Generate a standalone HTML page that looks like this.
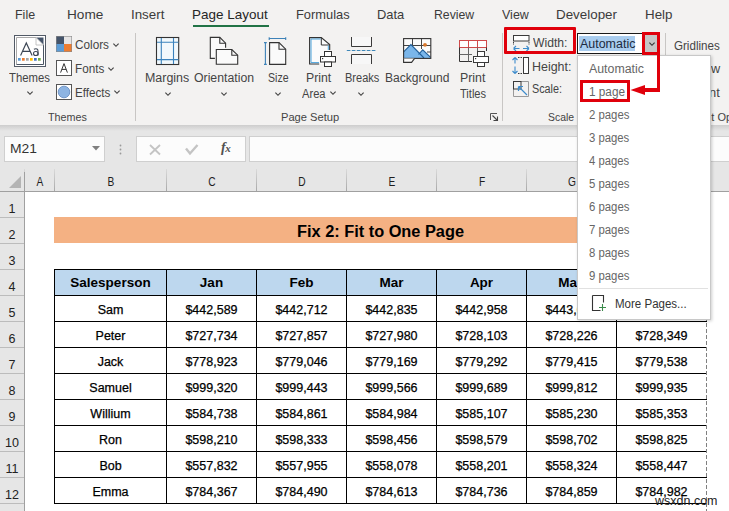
<!DOCTYPE html>
<html><head><meta charset="utf-8">
<style>
*{margin:0;padding:0;box-sizing:border-box}
html,body{width:729px;height:511px;overflow:hidden;background:#fff;font-family:"Liberation Sans",sans-serif;color:#262626;position:relative}
.a{position:absolute}
.t{position:absolute;white-space:nowrap}
svg{overflow:visible}
</style></head><body>
<div class="a" style="left:0;top:0;width:729px;height:125px;background:#f3f2f1"></div>
<div class="t" style="left:15.04px;top:8.20px;font-size:13px;line-height:13px;color:#3b3b3b;font-weight:normal;transform:scaleX(0.9588);transform-origin:0 0;">File</div>
<div class="t" style="left:66.95px;top:8.20px;font-size:13px;line-height:13px;color:#3b3b3b;font-weight:normal;transform:scaleX(1.0483);transform-origin:0 0;">Home</div>
<div class="t" style="left:130.77px;top:8.20px;font-size:13px;line-height:13px;color:#3b3b3b;font-weight:normal;transform:scaleX(1.0256);transform-origin:0 0;">Insert</div>
<div class="t" style="left:192.46px;top:8.20px;font-size:13px;line-height:13px;color:#262626;font-weight:normal;transform:scaleX(1.0362);transform-origin:0 0;">Page Layout</div>
<div class="t" style="left:295.61px;top:8.20px;font-size:13px;line-height:13px;color:#3b3b3b;font-weight:normal;transform:scaleX(0.9886);transform-origin:0 0;">Formulas</div>
<div class="t" style="left:377.01px;top:8.20px;font-size:13px;line-height:13px;color:#3b3b3b;font-weight:normal;transform:scaleX(0.9925);transform-origin:0 0;">Data</div>
<div class="t" style="left:433.56px;top:8.20px;font-size:13px;line-height:13px;color:#3b3b3b;font-weight:normal;transform:scaleX(0.9423);transform-origin:0 0;">Review</div>
<div class="t" style="left:502.00px;top:8.20px;font-size:13px;line-height:13px;color:#3b3b3b;font-weight:normal;transform:scaleX(0.9606);transform-origin:0 0;">View</div>
<div class="t" style="left:556.07px;top:8.20px;font-size:13px;line-height:13px;color:#3b3b3b;font-weight:normal;transform:scaleX(1.0293);transform-origin:0 0;">Developer</div>
<div class="t" style="left:644.57px;top:8.20px;font-size:13px;line-height:13px;color:#3b3b3b;font-weight:normal;transform:scaleX(1.0278);transform-origin:0 0;">Help</div>
<div class="a" style="left:193px;top:24.5px;width:75.5px;height:2.5px;background:#217346"></div>
<div class="a" style="left:135px;top:33px;width:1px;height:88px;background:#c8c6c4"></div>
<div class="a" style="left:502px;top:33px;width:1px;height:88px;background:#c8c6c4"></div>
<div class="a" style="left:665px;top:33px;width:1px;height:88px;background:#c8c6c4"></div>
<svg class="a" style="left:14px;top:35px" width="32" height="32">
<rect x="0.5" y="0.5" width="31" height="31" fill="#fff" stroke="#525a66"/>
<path d="M2.5,29.5 L2.5,2.5 L22,2.5" fill="none" stroke="#a9a9a9"/>
<path d="M29.5,9.5 L29.5,29.5 L2.5,29.5" fill="none" stroke="#4a5563"/>
<path d="M22,2.5 L29.5,2.5 L29.5,10 Z" fill="#44546a"/>
<path d="M22,2.5 L22,10 L29.5,10 Z" fill="#fff" stroke="#b5b5b5" stroke-width="0.8"/>
<path d="M6.6,20.6 L12.3,8 L18.1,20.6 M8.6,16.4 L16.1,16.4" fill="none" stroke="#3c4654" stroke-width="1.15"/>
<path d="M19.9,14.3 Q21.6,13.5 23,14 Q24,14.6 24,16 L24,20.6" fill="none" stroke="#3c4654" stroke-width="1.1"/>
<ellipse cx="21.8" cy="18.5" rx="2.3" ry="2" fill="none" stroke="#3c4654" stroke-width="1.1"/>
<rect x="4" y="23" width="2.7" height="2.7" fill="#5b9bd5"/><rect x="8" y="23" width="2.7" height="2.7" fill="#ed7d31"/>
<rect x="12" y="23" width="2.7" height="2.7" fill="#a5a5a5"/><rect x="16" y="23" width="2.7" height="2.7" fill="#ffc000"/>
<rect x="20" y="23" width="2.7" height="2.7" fill="#4472c4"/><rect x="24" y="23" width="2.7" height="2.7" fill="#70ad47"/>
</svg>
<div class="t" style="left:9.41px;top:72.44px;font-size:12px;line-height:12px;color:#444444;font-weight:normal;transform:scaleX(0.9438);transform-origin:0 0;">Themes</div>
<svg class="t" style="left:24.7px;top:89.2px" width="10" height="8"><path d="M2.4,2.7 L5,5.3 L7.6,2.7" fill="none" stroke="#404040" stroke-width="1.15"/></svg>
<svg class="a" style="left:56px;top:36px" width="16" height="16">
<rect x="0" y="0" width="8" height="8" fill="#44546a"/><rect x="8" y="0" width="8" height="8" fill="#e7e6e6"/>
<rect x="0" y="8" width="8" height="8" fill="#5b9bd5"/><rect x="8" y="8" width="8" height="8" fill="#ed7d31"/>
<rect x="0.3" y="0.3" width="15.4" height="15.4" fill="none" stroke="#8a8a8a" stroke-width="0.6"/>
</svg>
<svg class="a" style="left:56px;top:60px" width="16" height="16">
<rect x="0.5" y="0.5" width="15" height="15" fill="#fff" stroke="#555"/>
<path d="M4.6,12.6 L8,3.6 L11.4,12.6 M5.9,9.4 L10.1,9.4" fill="none" stroke="#333" stroke-width="1"/>
</svg>
<svg class="a" style="left:56px;top:84px" width="16" height="16">
<rect x="0.5" y="0.5" width="15" height="15" fill="#fff" stroke="#555"/>
<circle cx="8" cy="8" r="5.8" fill="#8db4e2" stroke="#6a90c4" stroke-width="0.9"/>
</svg>
<div class="t" style="left:75.11px;top:38.84px;font-size:12px;line-height:12px;color:#444444;font-weight:normal;transform:scaleX(0.9792);transform-origin:0 0;">Colors</div>
<svg class="t" style="left:111px;top:40.5px" width="10" height="8"><path d="M2.4,2.7 L5,5.3 L7.6,2.7" fill="none" stroke="#404040" stroke-width="1.15"/></svg>
<div class="t" style="left:74.72px;top:63.04px;font-size:12px;line-height:12px;color:#444444;font-weight:normal;transform:scaleX(0.9755);transform-origin:0 0;">Fonts</div>
<svg class="t" style="left:105.5px;top:64.5px" width="10" height="8"><path d="M2.4,2.7 L5,5.3 L7.6,2.7" fill="none" stroke="#404040" stroke-width="1.15"/></svg>
<div class="t" style="left:74.73px;top:86.74px;font-size:12px;line-height:12px;color:#444444;font-weight:normal;transform:scaleX(0.9687);transform-origin:0 0;">Effects</div>
<svg class="t" style="left:111.7px;top:88.3px" width="10" height="8"><path d="M2.4,2.7 L5,5.3 L7.6,2.7" fill="none" stroke="#404040" stroke-width="1.15"/></svg>
<div class="t" style="left:48.00px;top:112.29px;font-size:11px;line-height:11px;color:#444;font-weight:normal;transform:scaleX(0.9795);transform-origin:0 0;">Themes</div>
<div class="t" style="left:144.96px;top:72.14px;font-size:12px;line-height:12px;color:#444444;font-weight:normal;transform:scaleX(1.0363);transform-origin:0 0;">Margins</div>
<svg class="t" style="left:162.5px;top:89.5px" width="10" height="8"><path d="M2.4,2.7 L5,5.3 L7.6,2.7" fill="none" stroke="#404040" stroke-width="1.15"/></svg>
<div class="t" style="left:193.79px;top:72.14px;font-size:12px;line-height:12px;color:#444444;font-weight:normal;transform:scaleX(1.0226);transform-origin:0 0;">Orientation</div>
<svg class="t" style="left:218.5px;top:89.5px" width="10" height="8"><path d="M2.4,2.7 L5,5.3 L7.6,2.7" fill="none" stroke="#404040" stroke-width="1.15"/></svg>
<div class="t" style="left:267.96px;top:72.14px;font-size:12px;line-height:12px;color:#444444;font-weight:normal;transform:scaleX(0.8795);transform-origin:0 0;">Size</div>
<svg class="t" style="left:273px;top:89.5px" width="10" height="8"><path d="M2.4,2.7 L5,5.3 L7.6,2.7" fill="none" stroke="#404040" stroke-width="1.15"/></svg>
<div class="t" style="left:306.48px;top:72.14px;font-size:12px;line-height:12px;color:#444444;font-weight:normal;transform:scaleX(1.0212);transform-origin:0 0;">Print</div>
<div class="t" style="left:302.10px;top:88.24px;font-size:12px;line-height:12px;color:#444444;font-weight:normal;transform:scaleX(0.9291);transform-origin:0 0;">Area</div>
<svg class="t" style="left:327.5px;top:89px" width="10" height="8"><path d="M2.4,2.7 L5,5.3 L7.6,2.7" fill="none" stroke="#404040" stroke-width="1.15"/></svg>
<div class="t" style="left:344.68px;top:72.14px;font-size:12px;line-height:12px;color:#444444;font-weight:normal;transform:scaleX(0.9192);transform-origin:0 0;">Breaks</div>
<svg class="t" style="left:356px;top:89.5px" width="10" height="8"><path d="M2.4,2.7 L5,5.3 L7.6,2.7" fill="none" stroke="#404040" stroke-width="1.15"/></svg>
<div class="t" style="left:384.70px;top:72.14px;font-size:12px;line-height:12px;color:#444444;font-weight:normal;transform:scaleX(1.0048);transform-origin:0 0;">Background</div>
<div class="t" style="left:459.57px;top:72.14px;font-size:12px;line-height:12px;color:#444444;font-weight:normal;transform:scaleX(1.0297);transform-origin:0 0;">Print</div>
<div class="t" style="left:460.12px;top:88.04px;font-size:12px;line-height:12px;color:#444444;font-weight:normal;transform:scaleX(0.9239);transform-origin:0 0;">Titles</div>
<div class="t" style="left:281.19px;top:112.29px;font-size:11px;line-height:11px;color:#444;font-weight:normal;transform:scaleX(1.0125);transform-origin:0 0;">Page Setup</div>
<svg class="a" style="left:490px;top:113px" width="9" height="9"><path d="M0.5,7 L0.5,0.5 L7,0.5" fill="none" stroke="#555" stroke-width="1"/><path d="M2.5,2.5 L7.5,7.5 M7.5,3.5 L7.5,7.5 L3.5,7.5" fill="none" stroke="#444" stroke-width="1.1"/></svg>
<svg class="a" style="left:156px;top:37px" width="24" height="28">
<rect x="0.5" y="0.5" width="22.2" height="27" fill="#f1f8fc" stroke="#333" stroke-width="1.1"/>
<path d="M5.3,1 L5.3,27 M17.5,1 L17.5,27 M1,5.2 L22.5,5.2 M1,22.6 L22.5,22.6" stroke="#3a82bd" stroke-width="1.1"/>
</svg>
<svg class="a" style="left:209px;top:36px" width="31" height="31">
<path d="M1.3,1.4 L10.8,1.4 L16.6,7.2 L16.6,22.4 L1.3,22.4 Z" fill="#fafafa"/>
<path d="M16.6,11.8 L16.6,7.2 L10.8,1.4 L1.3,1.4 L1.3,22.4 L5.9,22.4" fill="none" stroke="#333" stroke-width="1.1"/>
<path d="M10.8,1.4 L10.8,7.2 L16.6,7.2" fill="none" stroke="#333" stroke-width="1.1"/>
<path d="M7.3,13.5 L22.8,13.5 L28.7,19.2 L28.7,28.3 L7.3,28.3 Z" fill="#fafafa" stroke="#333" stroke-width="1.1"/>
<path d="M22.8,13.5 L22.8,19.2 L28.7,19.2" fill="none" stroke="#333" stroke-width="1.1"/>
</svg>
<svg class="a" style="left:263px;top:36px" width="26" height="30">
<path d="M6.2,2.5 L22.7,2.5 M6.2,1.2 L6.2,3.9 M22.7,1.2 L22.7,3.9" stroke="#3d82b8" stroke-width="1.1"/>
<path d="M2.4,6.6 L2.4,28.4 M1,6.6 L3.8,6.6 M1,28.4 L3.8,28.4" stroke="#3d82b8" stroke-width="1.1"/>
<path d="M6.6,6.6 L16,6.6 L22.7,13.2 L22.7,28.4 L6.6,28.4 Z" fill="#fafafa" stroke="#333" stroke-width="1.1"/>
<path d="M16,6.6 L16,13.2 L22.7,13.2" fill="none" stroke="#333" stroke-width="1.1"/>
</svg>
<svg class="a" style="left:309px;top:37px" width="28" height="30">
<path d="M0.6,0.6 L12.3,0.6 L20.7,7.6 L20.7,27 L0.6,27 Z" fill="#fbfbfb"/>
<path d="M10.2,27 L0.6,27 L0.6,0.6 L12.3,0.6 L20.7,7.6 L20.7,13" fill="none" stroke="#333" stroke-width="1.1"/>
<path d="M12.3,0.6 L12.3,8 L20.7,8" fill="none" stroke="#333" stroke-width="1"/>
<path d="M11.5,2 L2,2 L2,25.6 L10,25.6 M19.3,8.5 L19.3,13" fill="none" stroke="#4aa3dc" stroke-width="1"/>
<rect x="15.5" y="14.5" width="7" height="5" fill="#fff" stroke="#333"/>
<rect x="11.5" y="19.5" width="15" height="5.5" fill="#fff" stroke="#333"/>
<rect x="15.5" y="25" width="7" height="4.5" fill="#fff" stroke="#333"/>
<rect x="13" y="21" width="1.2" height="1.2" fill="#333"/>
</svg>
<svg class="a" style="left:346px;top:37px" width="31" height="28">
<path d="M5.5,0 L5.5,9.5 L25.5,9.5 L25.5,0" fill="#f7f7f7" stroke="#3a3a3a"/>
<path d="M0.8,13.5 L30.2,13.5" stroke="#3f88b8" stroke-width="1.1" stroke-dasharray="3.6,1.4"/>
<path d="M5.5,27 L5.5,17.5 L25.5,17.5 L25.5,27" fill="#f7f7f7" stroke="#3a3a3a"/>
</svg>
<svg class="a" style="left:403px;top:38px" width="30" height="27">
<rect x="0.6" y="0.6" width="27.2" height="19.8" fill="#fbfbfb"/>
<path d="M9.5,0.6 L9.5,7 M18.5,0.6 L18.5,11 M0.6,7.5 L27.8,7.5 M0.6,14 L2,14 M24,14 L27.8,14" stroke="#444" stroke-width="1"/>
<path d="M0.6,20.4 L0.6,13.9 L7.9,6.6 L16.3,14.9 L19.7,11.8 L27.8,19.2 L27.8,20.4 Z" fill="#7ab6ea"/>
<path d="M0.6,13.9 L7.9,6.6 L21,20 M15.5,16.5 L19.7,11.8 L27.6,19.4" fill="none" stroke="#22609a" stroke-width="1.1"/>
<rect x="0.6" y="0.6" width="27.2" height="19.8" fill="none" stroke="#333" stroke-width="1.1"/>
<circle cx="22" cy="6.8" r="1.9" fill="#d9772a"/>
<path d="M0.6,20.4 L0.6,24.4 L8.6,24.4 L11.6,20.4" fill="#fbfbfb" stroke="#333" stroke-width="1.1"/>
</svg>
<svg class="a" style="left:459px;top:40px" width="31" height="28">
<rect x="0.5" y="0.5" width="27" height="7" fill="#fff" stroke="#d04a4a"/>
<path d="M9.5,0.5 L9.5,7.5 M18.5,0.5 L18.5,7.5" stroke="#d04a4a"/>
<path d="M0.5,7.5 L0.5,21.5 L13,21.5 M27.5,7.5 L27.5,11" fill="none" stroke="#333"/><path d="M0.5,14.5 L13,14.5 M9.5,7.5 L9.5,21.5 M18.5,7.5 L18.5,11" fill="none" stroke="#666"/>
<rect x="18.5" y="11.5" width="7" height="5" fill="#fff" stroke="#3a3a3a"/>
<rect x="14.5" y="16.5" width="15" height="6" fill="#fff" stroke="#3a3a3a"/>
<rect x="18.5" y="22.5" width="7" height="4" fill="#fff" stroke="#3a3a3a"/>
<rect x="16" y="18" width="1.2" height="1.2" fill="#3a3a3a"/>
</svg>
<svg class="a" style="left:512px;top:34px" width="18" height="18">
<rect x="1.5" y="1.5" width="15.5" height="5.5" fill="#fff" stroke="#3a3a3a"/>
<path d="M1.5,8 L1.5,11 M17,8 L17,11" stroke="#3a3a3a" stroke-dasharray="1.5,1"/>
<path d="M1.5,14.5 L7.5,14.5 M11,14.5 L17,14.5 M1.5,14.5 L4,12 M1.5,14.5 L4,17 M17,14.5 L14.5,12 M17,14.5 L14.5,17" stroke="#3d8ccc" stroke-width="1.1" fill="none"/>
</svg>
<svg class="a" style="left:512px;top:56px" width="18" height="20">
<path d="M3,1.5 L3,7.5 M3,10.5 L3,17.5 M3,1.5 L0.5,4 M3,1.5 L5.5,4 M3,17.5 L0.5,15 M3,17.5 L5.5,15" stroke="#3d8ccc" stroke-width="1.1" fill="none"/>
<path d="M6,1.5 L11,1.5 M6,17.5 L11,17.5" stroke="#3a3a3a" stroke-dasharray="1.5,1"/>
<rect x="11.5" y="1.5" width="5" height="16" fill="#fff" stroke="#3a3a3a"/>
</svg>
<svg class="a" style="left:512px;top:80px" width="18" height="18">
<path d="M1.5,9 L1.5,16.5 L16.5,16.5 L16.5,1.5 L9,1.5" fill="none" stroke="#9a9a9a"/>
<rect x="1.5" y="1.5" width="7.5" height="7.5" fill="none" stroke="#3a3a3a"/>
<path d="M15,15 L6.5,6.5 M6.5,6.5 L6.5,11 M6.5,6.5 L11,6.5" stroke="#3d8ccc" stroke-width="1.2" fill="none"/>
</svg>
<div class="t" style="left:532.50px;top:37.32px;font-size:12.5px;line-height:12.5px;color:#444444;font-weight:normal;transform:scaleX(0.9738);transform-origin:0 0;">Width:</div>
<div class="t" style="left:531.81px;top:60.52px;font-size:12.5px;line-height:12.5px;color:#444444;font-weight:normal;transform:scaleX(0.9947);transform-origin:0 0;">Height:</div>
<div class="t" style="left:531.88px;top:83.12px;font-size:12.5px;line-height:12.5px;color:#444444;font-weight:normal;transform:scaleX(0.8640);transform-origin:0 0;">Scale:</div>
<div class="t" style="left:547.83px;top:112.29px;font-size:11px;line-height:11px;color:#444;font-weight:normal;transform:scaleX(0.9474);transform-origin:0 0;">Scale</div>
<div class="a" style="left:577px;top:33px;width:66px;height:21px;background:#fff;border:1.5px solid #1a1a1a;border-right:none"></div>
<div class="a" style="left:579px;top:35.5px;width:56px;height:15.5px;background:#a9cdef"></div>
<div class="t" style="left:579.80px;top:37.72px;font-size:12.5px;line-height:12.5px;color:#1c2a40;font-weight:normal;transform:scaleX(0.9964);transform-origin:0 0;">Automatic</div>
<div class="a" style="left:643px;top:33px;width:16px;height:21px;background:#c6c6c6"></div>
<svg class="t" style="left:646.5px;top:40px" width="10" height="8"><path d="M2.4,2.7 L5,5.3 L7.6,2.7" fill="none" stroke="#333" stroke-width="1.15"/></svg>
<div class="t" style="left:674.22px;top:40.04px;font-size:12px;line-height:12px;color:#444444;font-weight:normal;transform:scaleX(0.9654);transform-origin:0 0;">Gridlines</div>
<div class="t" style="left:710.60px;top:63.34px;font-size:12px;line-height:12px;color:#444444;font-weight:normal;transform:scaleX(1.0575);transform-origin:0 0;">w</div>
<div class="t" style="left:708.64px;top:86.54px;font-size:12px;line-height:12px;color:#444444;font-weight:normal;transform:scaleX(1.0761);transform-origin:0 0;">nt</div>
<div class="t" style="left:711.3px;top:112.49px;font-size:11px;line-height:11px;color:#444;font-weight:normal;">t Options</div>
<div class="a" style="left:0;top:125px;width:729px;height:67px;background:#e6e6e6"></div>
<div class="a" style="left:0;top:125px;width:729px;height:6px;background:linear-gradient(#cdcdcd,#e6e6e6)"></div>
<div class="a" style="left:4px;top:136px;width:101px;height:26px;background:#fcfcfc;border:1px solid #cfcfcf"></div>
<div class="t" style="left:10.24px;top:143.24px;font-size:12px;line-height:12px;color:#333;font-weight:normal;transform:scaleX(1.1560);transform-origin:0 0;">M21</div>
<svg class="a" style="left:91.5px;top:145.5px" width="8" height="5"><path d="M0,0 L8,0 L4,4.5 Z" fill="#808080"/></svg>
<svg class="a" style="left:119px;top:144px" width="3" height="11"><circle cx="1.5" cy="1.5" r="0.9" fill="#9a9a9a"/><circle cx="1.5" cy="5.5" r="0.9" fill="#9a9a9a"/><circle cx="1.5" cy="9.5" r="0.9" fill="#9a9a9a"/></svg>
<div class="a" style="left:136px;top:136px;width:110px;height:26px;background:#fcfcfc;border:1px solid #cfcfcf"></div>
<svg class="a" style="left:149px;top:144px" width="12" height="12"><path d="M1,1 L11,10.5 M11,1 L1,10.5" stroke="#c4c4c4" stroke-width="1.8"/></svg>
<svg class="a" style="left:184px;top:143px" width="15" height="13"><path d="M2,5.5 L6,10.5 L13.5,2" fill="none" stroke="#c4c4c4" stroke-width="2.4"/></svg>
<div class="t" style="left:221px;top:141px;font-family:'Liberation Serif',serif;font-style:italic;font-weight:bold;font-size:14px;line-height:14px;color:#505050">f<span style="font-size:11px;margin-left:-0.5px">x</span></div>
<div class="a" style="left:249px;top:136px;width:490px;height:26px;background:#fcfcfc;border:1px solid #cfcfcf"></div>
<div class="a" style="left:0;top:191px;width:729px;height:1px;background:#a0a0a0"></div>
<svg class="a" style="left:9px;top:176px" width="13" height="13"><path d="M12,0 L12,12 L0,12 Z" fill="#b4b4b4"/></svg>
<div class="a" style="left:24px;top:169px;width:1px;height:22px;background:linear-gradient(#dadada,#a8a8a8)"></div>
<div class="a" style="left:54px;top:169px;width:1px;height:22px;background:linear-gradient(#dadada,#a8a8a8)"></div>
<div class="a" style="left:166px;top:169px;width:1px;height:22px;background:linear-gradient(#dadada,#a8a8a8)"></div>
<div class="a" style="left:256px;top:169px;width:1px;height:22px;background:linear-gradient(#dadada,#a8a8a8)"></div>
<div class="a" style="left:346px;top:169px;width:1px;height:22px;background:linear-gradient(#dadada,#a8a8a8)"></div>
<div class="a" style="left:436px;top:169px;width:1px;height:22px;background:linear-gradient(#dadada,#a8a8a8)"></div>
<div class="a" style="left:526px;top:169px;width:1px;height:22px;background:linear-gradient(#dadada,#a8a8a8)"></div>
<div class="a" style="left:616px;top:169px;width:1px;height:22px;background:linear-gradient(#dadada,#a8a8a8)"></div>
<div class="a" style="left:706px;top:169px;width:1px;height:22px;background:linear-gradient(#dadada,#a8a8a8)"></div>
<div class="t" style="left:9.50px;width:60px;text-align:center;top:176.44px;font-size:12px;line-height:12px;color:#1e1e1e;font-weight:normal;transform:scaleX(0.85)">A</div>
<div class="t" style="left:80.50px;width:60px;text-align:center;top:176.44px;font-size:12px;line-height:12px;color:#1e1e1e;font-weight:normal;transform:scaleX(0.85)">B</div>
<div class="t" style="left:181.50px;width:60px;text-align:center;top:176.44px;font-size:12px;line-height:12px;color:#1e1e1e;font-weight:normal;transform:scaleX(0.85)">C</div>
<div class="t" style="left:271.50px;width:60px;text-align:center;top:176.44px;font-size:12px;line-height:12px;color:#1e1e1e;font-weight:normal;transform:scaleX(0.85)">D</div>
<div class="t" style="left:361.50px;width:60px;text-align:center;top:176.44px;font-size:12px;line-height:12px;color:#1e1e1e;font-weight:normal;transform:scaleX(0.85)">E</div>
<div class="t" style="left:451.50px;width:60px;text-align:center;top:176.44px;font-size:12px;line-height:12px;color:#1e1e1e;font-weight:normal;transform:scaleX(0.85)">F</div>
<div class="t" style="left:541.50px;width:60px;text-align:center;top:176.44px;font-size:12px;line-height:12px;color:#1e1e1e;font-weight:normal;transform:scaleX(0.85)">G</div>
<div class="t" style="left:631.50px;width:60px;text-align:center;top:176.44px;font-size:12px;line-height:12px;color:#1e1e1e;font-weight:normal;transform:scaleX(0.85)">H</div>
<div class="a" style="left:0;top:192px;width:24px;height:319px;background:#e6e6e6"></div>
<div class="a" style="left:24px;top:172px;width:1px;height:339px;background:#a0a0a0"></div>
<div class="a" style="left:0;top:217px;width:24px;height:1px;background:#bcbcbc"></div>
<div class="t" style="left:0.00px;width:24px;text-align:center;top:202.62px;font-size:12.5px;line-height:12.5px;color:#222;font-weight:normal;">1</div>
<div class="a" style="left:0;top:243px;width:24px;height:1px;background:#bcbcbc"></div>
<div class="t" style="left:0.00px;width:24px;text-align:center;top:228.62px;font-size:12.5px;line-height:12.5px;color:#222;font-weight:normal;">2</div>
<div class="a" style="left:0;top:269px;width:24px;height:1px;background:#bcbcbc"></div>
<div class="t" style="left:0.00px;width:24px;text-align:center;top:254.62px;font-size:12.5px;line-height:12.5px;color:#222;font-weight:normal;">3</div>
<div class="a" style="left:0;top:295px;width:24px;height:1px;background:#bcbcbc"></div>
<div class="t" style="left:0.00px;width:24px;text-align:center;top:280.62px;font-size:12.5px;line-height:12.5px;color:#222;font-weight:normal;">4</div>
<div class="a" style="left:0;top:321px;width:24px;height:1px;background:#bcbcbc"></div>
<div class="t" style="left:0.00px;width:24px;text-align:center;top:306.62px;font-size:12.5px;line-height:12.5px;color:#222;font-weight:normal;">5</div>
<div class="a" style="left:0;top:347px;width:24px;height:1px;background:#bcbcbc"></div>
<div class="t" style="left:0.00px;width:24px;text-align:center;top:332.62px;font-size:12.5px;line-height:12.5px;color:#222;font-weight:normal;">6</div>
<div class="a" style="left:0;top:373px;width:24px;height:1px;background:#bcbcbc"></div>
<div class="t" style="left:0.00px;width:24px;text-align:center;top:358.62px;font-size:12.5px;line-height:12.5px;color:#222;font-weight:normal;">7</div>
<div class="a" style="left:0;top:399px;width:24px;height:1px;background:#bcbcbc"></div>
<div class="t" style="left:0.00px;width:24px;text-align:center;top:384.62px;font-size:12.5px;line-height:12.5px;color:#222;font-weight:normal;">8</div>
<div class="a" style="left:0;top:425px;width:24px;height:1px;background:#bcbcbc"></div>
<div class="t" style="left:0.00px;width:24px;text-align:center;top:410.62px;font-size:12.5px;line-height:12.5px;color:#222;font-weight:normal;">9</div>
<div class="a" style="left:0;top:451px;width:24px;height:1px;background:#bcbcbc"></div>
<div class="t" style="left:0.00px;width:24px;text-align:center;top:436.62px;font-size:12.5px;line-height:12.5px;color:#222;font-weight:normal;">10</div>
<div class="a" style="left:0;top:477px;width:24px;height:1px;background:#bcbcbc"></div>
<div class="t" style="left:0.00px;width:24px;text-align:center;top:462.62px;font-size:12.5px;line-height:12.5px;color:#222;font-weight:normal;">11</div>
<div class="a" style="left:0;top:503px;width:24px;height:1px;background:#bcbcbc"></div>
<div class="t" style="left:0.00px;width:24px;text-align:center;top:488.62px;font-size:12.5px;line-height:12.5px;color:#222;font-weight:normal;">12</div>
<div class="a" style="left:54px;top:217px;width:652px;height:26px;background:#f4b183"></div>
<div class="t" style="left:296.78px;top:224.06px;font-size:16px;line-height:16px;color:#000;font-weight:bold;transform:scaleX(1.0210);transform-origin:0 0;">Fix 2: Fit to One Page</div>
<div class="a" style="left:54px;top:269px;width:652px;height:26px;background:#bdd7ee"></div>
<div class="t" style="left:55.50px;width:110px;text-align:center;top:276.17px;font-size:13.5px;line-height:13.5px;color:#000;font-weight:bold;">Salesperson</div>
<div class="t" style="left:156.50px;width:110px;text-align:center;top:276.17px;font-size:13.5px;line-height:13.5px;color:#000;font-weight:bold;">Jan</div>
<div class="t" style="left:246.50px;width:110px;text-align:center;top:276.17px;font-size:13.5px;line-height:13.5px;color:#000;font-weight:bold;">Feb</div>
<div class="t" style="left:336.50px;width:110px;text-align:center;top:276.17px;font-size:13.5px;line-height:13.5px;color:#000;font-weight:bold;">Mar</div>
<div class="t" style="left:426.50px;width:110px;text-align:center;top:276.17px;font-size:13.5px;line-height:13.5px;color:#000;font-weight:bold;">Apr</div>
<div class="t" style="left:516.50px;width:110px;text-align:center;top:276.17px;font-size:13.5px;line-height:13.5px;color:#000;font-weight:bold;">May</div>
<div class="t" style="left:606.50px;width:110px;text-align:center;top:276.17px;font-size:13.5px;line-height:13.5px;color:#000;font-weight:bold;">Jun</div>
<div class="t" style="left:55.50px;width:110px;text-align:center;top:304.42px;font-size:12.5px;line-height:12.5px;color:#000;font-weight:normal;-webkit-text-stroke:0.25px #000">Sam</div>
<div class="t" style="left:156.50px;width:110px;text-align:center;top:304.42px;font-size:12.5px;line-height:12.5px;color:#000;font-weight:normal;-webkit-text-stroke:0.25px #000">$442,589</div>
<div class="t" style="left:246.50px;width:110px;text-align:center;top:304.42px;font-size:12.5px;line-height:12.5px;color:#000;font-weight:normal;-webkit-text-stroke:0.25px #000">$442,712</div>
<div class="t" style="left:336.50px;width:110px;text-align:center;top:304.42px;font-size:12.5px;line-height:12.5px;color:#000;font-weight:normal;-webkit-text-stroke:0.25px #000">$442,835</div>
<div class="t" style="left:426.50px;width:110px;text-align:center;top:304.42px;font-size:12.5px;line-height:12.5px;color:#000;font-weight:normal;-webkit-text-stroke:0.25px #000">$442,958</div>
<div class="t" style="left:516.50px;width:110px;text-align:center;top:304.42px;font-size:12.5px;line-height:12.5px;color:#000;font-weight:normal;-webkit-text-stroke:0.25px #000">$443,081</div>
<div class="t" style="left:606.50px;width:110px;text-align:center;top:304.42px;font-size:12.5px;line-height:12.5px;color:#000;font-weight:normal;-webkit-text-stroke:0.25px #000">$443,204</div>
<div class="t" style="left:55.50px;width:110px;text-align:center;top:330.42px;font-size:12.5px;line-height:12.5px;color:#000;font-weight:normal;-webkit-text-stroke:0.25px #000">Peter</div>
<div class="t" style="left:156.50px;width:110px;text-align:center;top:330.42px;font-size:12.5px;line-height:12.5px;color:#000;font-weight:normal;-webkit-text-stroke:0.25px #000">$727,734</div>
<div class="t" style="left:246.50px;width:110px;text-align:center;top:330.42px;font-size:12.5px;line-height:12.5px;color:#000;font-weight:normal;-webkit-text-stroke:0.25px #000">$727,857</div>
<div class="t" style="left:336.50px;width:110px;text-align:center;top:330.42px;font-size:12.5px;line-height:12.5px;color:#000;font-weight:normal;-webkit-text-stroke:0.25px #000">$727,980</div>
<div class="t" style="left:426.50px;width:110px;text-align:center;top:330.42px;font-size:12.5px;line-height:12.5px;color:#000;font-weight:normal;-webkit-text-stroke:0.25px #000">$728,103</div>
<div class="t" style="left:516.50px;width:110px;text-align:center;top:330.42px;font-size:12.5px;line-height:12.5px;color:#000;font-weight:normal;-webkit-text-stroke:0.25px #000">$728,226</div>
<div class="t" style="left:606.50px;width:110px;text-align:center;top:330.42px;font-size:12.5px;line-height:12.5px;color:#000;font-weight:normal;-webkit-text-stroke:0.25px #000">$728,349</div>
<div class="t" style="left:55.50px;width:110px;text-align:center;top:356.42px;font-size:12.5px;line-height:12.5px;color:#000;font-weight:normal;-webkit-text-stroke:0.25px #000">Jack</div>
<div class="t" style="left:156.50px;width:110px;text-align:center;top:356.42px;font-size:12.5px;line-height:12.5px;color:#000;font-weight:normal;-webkit-text-stroke:0.25px #000">$778,923</div>
<div class="t" style="left:246.50px;width:110px;text-align:center;top:356.42px;font-size:12.5px;line-height:12.5px;color:#000;font-weight:normal;-webkit-text-stroke:0.25px #000">$779,046</div>
<div class="t" style="left:336.50px;width:110px;text-align:center;top:356.42px;font-size:12.5px;line-height:12.5px;color:#000;font-weight:normal;-webkit-text-stroke:0.25px #000">$779,169</div>
<div class="t" style="left:426.50px;width:110px;text-align:center;top:356.42px;font-size:12.5px;line-height:12.5px;color:#000;font-weight:normal;-webkit-text-stroke:0.25px #000">$779,292</div>
<div class="t" style="left:516.50px;width:110px;text-align:center;top:356.42px;font-size:12.5px;line-height:12.5px;color:#000;font-weight:normal;-webkit-text-stroke:0.25px #000">$779,415</div>
<div class="t" style="left:606.50px;width:110px;text-align:center;top:356.42px;font-size:12.5px;line-height:12.5px;color:#000;font-weight:normal;-webkit-text-stroke:0.25px #000">$779,538</div>
<div class="t" style="left:55.50px;width:110px;text-align:center;top:382.42px;font-size:12.5px;line-height:12.5px;color:#000;font-weight:normal;-webkit-text-stroke:0.25px #000">Samuel</div>
<div class="t" style="left:156.50px;width:110px;text-align:center;top:382.42px;font-size:12.5px;line-height:12.5px;color:#000;font-weight:normal;-webkit-text-stroke:0.25px #000">$999,320</div>
<div class="t" style="left:246.50px;width:110px;text-align:center;top:382.42px;font-size:12.5px;line-height:12.5px;color:#000;font-weight:normal;-webkit-text-stroke:0.25px #000">$999,443</div>
<div class="t" style="left:336.50px;width:110px;text-align:center;top:382.42px;font-size:12.5px;line-height:12.5px;color:#000;font-weight:normal;-webkit-text-stroke:0.25px #000">$999,566</div>
<div class="t" style="left:426.50px;width:110px;text-align:center;top:382.42px;font-size:12.5px;line-height:12.5px;color:#000;font-weight:normal;-webkit-text-stroke:0.25px #000">$999,689</div>
<div class="t" style="left:516.50px;width:110px;text-align:center;top:382.42px;font-size:12.5px;line-height:12.5px;color:#000;font-weight:normal;-webkit-text-stroke:0.25px #000">$999,812</div>
<div class="t" style="left:606.50px;width:110px;text-align:center;top:382.42px;font-size:12.5px;line-height:12.5px;color:#000;font-weight:normal;-webkit-text-stroke:0.25px #000">$999,935</div>
<div class="t" style="left:55.50px;width:110px;text-align:center;top:408.42px;font-size:12.5px;line-height:12.5px;color:#000;font-weight:normal;-webkit-text-stroke:0.25px #000">Willium</div>
<div class="t" style="left:156.50px;width:110px;text-align:center;top:408.42px;font-size:12.5px;line-height:12.5px;color:#000;font-weight:normal;-webkit-text-stroke:0.25px #000">$584,738</div>
<div class="t" style="left:246.50px;width:110px;text-align:center;top:408.42px;font-size:12.5px;line-height:12.5px;color:#000;font-weight:normal;-webkit-text-stroke:0.25px #000">$584,861</div>
<div class="t" style="left:336.50px;width:110px;text-align:center;top:408.42px;font-size:12.5px;line-height:12.5px;color:#000;font-weight:normal;-webkit-text-stroke:0.25px #000">$584,984</div>
<div class="t" style="left:426.50px;width:110px;text-align:center;top:408.42px;font-size:12.5px;line-height:12.5px;color:#000;font-weight:normal;-webkit-text-stroke:0.25px #000">$585,107</div>
<div class="t" style="left:516.50px;width:110px;text-align:center;top:408.42px;font-size:12.5px;line-height:12.5px;color:#000;font-weight:normal;-webkit-text-stroke:0.25px #000">$585,230</div>
<div class="t" style="left:606.50px;width:110px;text-align:center;top:408.42px;font-size:12.5px;line-height:12.5px;color:#000;font-weight:normal;-webkit-text-stroke:0.25px #000">$585,353</div>
<div class="t" style="left:55.50px;width:110px;text-align:center;top:434.42px;font-size:12.5px;line-height:12.5px;color:#000;font-weight:normal;-webkit-text-stroke:0.25px #000">Ron</div>
<div class="t" style="left:156.50px;width:110px;text-align:center;top:434.42px;font-size:12.5px;line-height:12.5px;color:#000;font-weight:normal;-webkit-text-stroke:0.25px #000">$598,210</div>
<div class="t" style="left:246.50px;width:110px;text-align:center;top:434.42px;font-size:12.5px;line-height:12.5px;color:#000;font-weight:normal;-webkit-text-stroke:0.25px #000">$598,333</div>
<div class="t" style="left:336.50px;width:110px;text-align:center;top:434.42px;font-size:12.5px;line-height:12.5px;color:#000;font-weight:normal;-webkit-text-stroke:0.25px #000">$598,456</div>
<div class="t" style="left:426.50px;width:110px;text-align:center;top:434.42px;font-size:12.5px;line-height:12.5px;color:#000;font-weight:normal;-webkit-text-stroke:0.25px #000">$598,579</div>
<div class="t" style="left:516.50px;width:110px;text-align:center;top:434.42px;font-size:12.5px;line-height:12.5px;color:#000;font-weight:normal;-webkit-text-stroke:0.25px #000">$598,702</div>
<div class="t" style="left:606.50px;width:110px;text-align:center;top:434.42px;font-size:12.5px;line-height:12.5px;color:#000;font-weight:normal;-webkit-text-stroke:0.25px #000">$598,825</div>
<div class="t" style="left:55.50px;width:110px;text-align:center;top:460.42px;font-size:12.5px;line-height:12.5px;color:#000;font-weight:normal;-webkit-text-stroke:0.25px #000">Bob</div>
<div class="t" style="left:156.50px;width:110px;text-align:center;top:460.42px;font-size:12.5px;line-height:12.5px;color:#000;font-weight:normal;-webkit-text-stroke:0.25px #000">$557,832</div>
<div class="t" style="left:246.50px;width:110px;text-align:center;top:460.42px;font-size:12.5px;line-height:12.5px;color:#000;font-weight:normal;-webkit-text-stroke:0.25px #000">$557,955</div>
<div class="t" style="left:336.50px;width:110px;text-align:center;top:460.42px;font-size:12.5px;line-height:12.5px;color:#000;font-weight:normal;-webkit-text-stroke:0.25px #000">$558,078</div>
<div class="t" style="left:426.50px;width:110px;text-align:center;top:460.42px;font-size:12.5px;line-height:12.5px;color:#000;font-weight:normal;-webkit-text-stroke:0.25px #000">$558,201</div>
<div class="t" style="left:516.50px;width:110px;text-align:center;top:460.42px;font-size:12.5px;line-height:12.5px;color:#000;font-weight:normal;-webkit-text-stroke:0.25px #000">$558,324</div>
<div class="t" style="left:606.50px;width:110px;text-align:center;top:460.42px;font-size:12.5px;line-height:12.5px;color:#000;font-weight:normal;-webkit-text-stroke:0.25px #000">$558,447</div>
<div class="t" style="left:55.50px;width:110px;text-align:center;top:486.42px;font-size:12.5px;line-height:12.5px;color:#000;font-weight:normal;-webkit-text-stroke:0.25px #000">Emma</div>
<div class="t" style="left:156.50px;width:110px;text-align:center;top:486.42px;font-size:12.5px;line-height:12.5px;color:#000;font-weight:normal;-webkit-text-stroke:0.25px #000">$784,367</div>
<div class="t" style="left:246.50px;width:110px;text-align:center;top:486.42px;font-size:12.5px;line-height:12.5px;color:#000;font-weight:normal;-webkit-text-stroke:0.25px #000">$784,490</div>
<div class="t" style="left:336.50px;width:110px;text-align:center;top:486.42px;font-size:12.5px;line-height:12.5px;color:#000;font-weight:normal;-webkit-text-stroke:0.25px #000">$784,613</div>
<div class="t" style="left:426.50px;width:110px;text-align:center;top:486.42px;font-size:12.5px;line-height:12.5px;color:#000;font-weight:normal;-webkit-text-stroke:0.25px #000">$784,736</div>
<div class="t" style="left:516.50px;width:110px;text-align:center;top:486.42px;font-size:12.5px;line-height:12.5px;color:#000;font-weight:normal;-webkit-text-stroke:0.25px #000">$784,859</div>
<div class="t" style="left:606.50px;width:110px;text-align:center;top:486.42px;font-size:12.5px;line-height:12.5px;color:#000;font-weight:normal;-webkit-text-stroke:0.25px #000">$784,982</div>
<div class="a" style="left:54px;top:269px;width:653px;height:1.4px;background:#000"></div>
<div class="a" style="left:54px;top:295px;width:653px;height:1.4px;background:#000"></div>
<div class="a" style="left:54px;top:321px;width:653px;height:1.4px;background:#000"></div>
<div class="a" style="left:54px;top:347px;width:653px;height:1.4px;background:#000"></div>
<div class="a" style="left:54px;top:373px;width:653px;height:1.4px;background:#000"></div>
<div class="a" style="left:54px;top:399px;width:653px;height:1.4px;background:#000"></div>
<div class="a" style="left:54px;top:425px;width:653px;height:1.4px;background:#000"></div>
<div class="a" style="left:54px;top:451px;width:653px;height:1.4px;background:#000"></div>
<div class="a" style="left:54px;top:477px;width:653px;height:1.4px;background:#000"></div>
<div class="a" style="left:54px;top:503px;width:653px;height:1.4px;background:#000"></div>
<div class="a" style="left:54px;top:269px;width:1.4px;height:235px;background:#000"></div>
<div class="a" style="left:166px;top:269px;width:1.4px;height:235px;background:#000"></div>
<div class="a" style="left:256px;top:269px;width:1.4px;height:235px;background:#000"></div>
<div class="a" style="left:346px;top:269px;width:1.4px;height:235px;background:#000"></div>
<div class="a" style="left:436px;top:269px;width:1.4px;height:235px;background:#000"></div>
<div class="a" style="left:526px;top:269px;width:1.4px;height:235px;background:#000"></div>
<div class="a" style="left:616px;top:269px;width:1.4px;height:235px;background:#000"></div>
<div class="a" style="left:706px;top:269px;width:1.2px;height:242px;background:repeating-linear-gradient(#808080 0 4px,transparent 4px 6px)"></div>
<div class="t" style="left:655.00px;top:494.00px;font-size:13px;line-height:13px;color:#222;font-weight:normal;transform:scaleX(0.9611);transform-origin:0 0;">wsxdn.com</div>
<div class="a" style="left:577px;top:55px;width:134px;height:265px;background:#fff;border:1px solid #c8c8c8;box-shadow:1px 1px 3px rgba(0,0,0,0.2)"></div>
<div class="t" style="left:589.40px;top:62.54px;font-size:12px;line-height:12px;color:#666;font-weight:normal;transform:scaleX(1.0301);transform-origin:0 0;">Automatic</div>
<div class="t" style="left:588.52px;top:85.54px;font-size:12px;line-height:12px;color:#666;font-weight:normal;transform:scaleX(0.9802);transform-origin:0 0;">1 page</div>
<div class="t" style="left:588.83px;top:108.54px;font-size:12px;line-height:12px;color:#666;font-weight:normal;transform:scaleX(0.9472);transform-origin:0 0;">2 pages</div>
<div class="t" style="left:589.02px;top:131.54px;font-size:12px;line-height:12px;color:#666;font-weight:normal;transform:scaleX(0.9427);transform-origin:0 0;">3 pages</div>
<div class="t" style="left:589.21px;top:154.54px;font-size:12px;line-height:12px;color:#666;font-weight:normal;transform:scaleX(0.9382);transform-origin:0 0;">4 pages</div>
<div class="t" style="left:588.93px;top:177.54px;font-size:12px;line-height:12px;color:#666;font-weight:normal;transform:scaleX(0.9450);transform-origin:0 0;">5 pages</div>
<div class="t" style="left:588.83px;top:200.54px;font-size:12px;line-height:12px;color:#666;font-weight:normal;transform:scaleX(0.9472);transform-origin:0 0;">6 pages</div>
<div class="t" style="left:588.83px;top:223.54px;font-size:12px;line-height:12px;color:#666;font-weight:normal;transform:scaleX(0.9472);transform-origin:0 0;">7 pages</div>
<div class="t" style="left:588.93px;top:246.54px;font-size:12px;line-height:12px;color:#666;font-weight:normal;transform:scaleX(0.9450);transform-origin:0 0;">8 pages</div>
<div class="t" style="left:588.93px;top:269.54px;font-size:12px;line-height:12px;color:#666;font-weight:normal;transform:scaleX(0.9450);transform-origin:0 0;">9 pages</div>
<div class="a" style="left:579px;top:288px;width:129px;height:1px;background:#e1e1e1"></div>
<svg class="a" style="left:591px;top:294px" width="16" height="18"><path d="M1.5,1.5 L12.5,1.5 L12.5,8.5 M9.5,16.5 L1.5,16.5 L1.5,1.5" fill="none" stroke="#333" stroke-width="1.1"/><path d="M8,13.5 L15,13.5 M11.5,10 L11.5,17" stroke="#3a8a4a" stroke-width="1.1"/></svg>
<div class="t" style="left:615.04px;top:297.84px;font-size:12px;line-height:12px;color:#333;font-weight:normal;transform:scaleX(0.9601);transform-origin:0 0;">More Pages...</div>
<div class="a" style="left:504px;top:27px;width:72px;height:26.5px;border:3px solid #e0000b;border-radius:1px"></div>
<div class="a" style="left:642px;top:32px;width:18px;height:23px;border:3px solid #e0000b"></div>
<div class="a" style="left:580px;top:80px;width:50px;height:22px;border:3px solid #e0000b"></div>
<div class="a" style="left:656.5px;top:54px;width:3.2px;height:37.5px;background:#e0000b"></div>
<div class="a" style="left:643px;top:88px;width:16.7px;height:3.5px;background:#e0000b"></div>
<svg class="a" style="left:630px;top:84px" width="16" height="12"><path d="M0.5,6 L15,1 L15,11 Z" fill="#e0000b"/></svg>
</body></html>
